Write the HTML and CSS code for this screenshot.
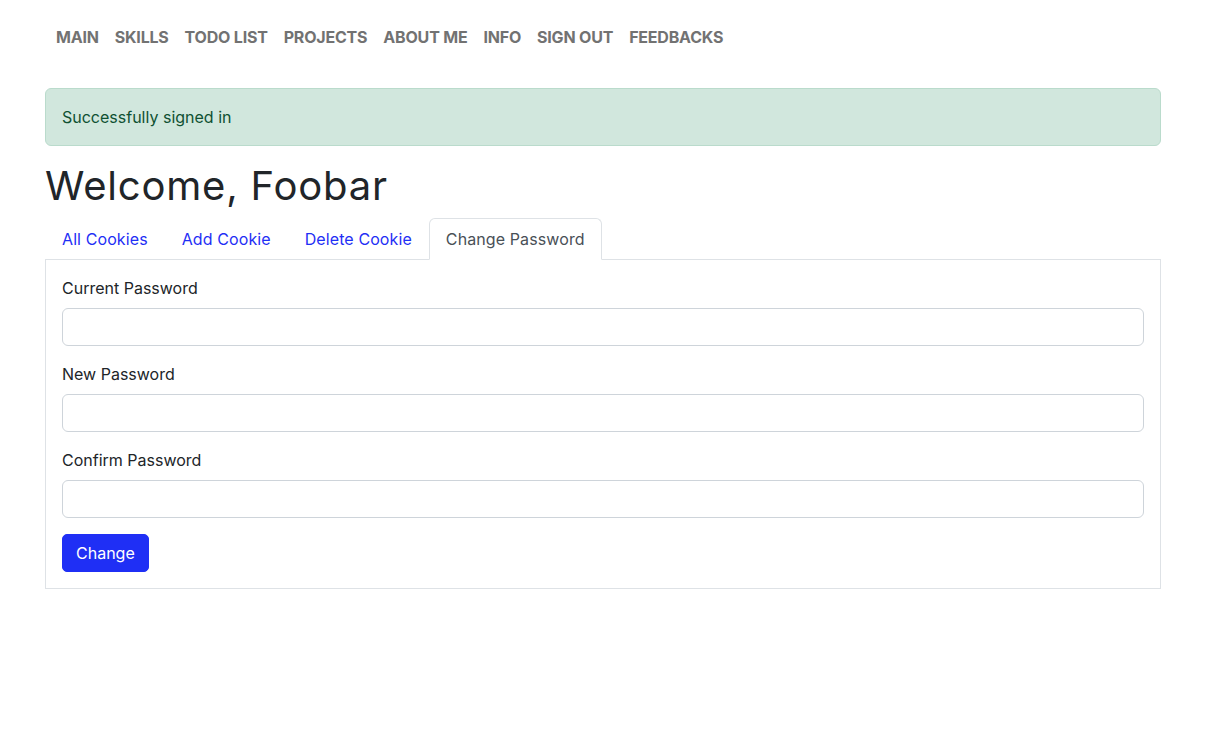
FILE: index.html
```html
<!DOCTYPE html>
<html lang="en">
<head>
<meta charset="utf-8">
<title>Welcome</title>
<link rel="stylesheet" href="styles.css">
</head>
<body>
<nav class="navbar">
  <ul class="nav-list">
    <li><a class="nav-link" href="#">Main</a></li>
    <li><a class="nav-link" href="#">Skills</a></li>
    <li><a class="nav-link" href="#">Todo list</a></li>
    <li><a class="nav-link" href="#">Projects</a></li>
    <li><a class="nav-link" href="#">About me</a></li>
    <li><a class="nav-link" href="#">Info</a></li>
    <li><a class="nav-link" href="#">Sign out</a></li>
    <li><a class="nav-link" href="#">Feedbacks</a></li>
  </ul>
</nav>
<main class="container">
  <div class="alert">Successfully signed in</div>
  <h1 class="title">Welcome, Foobar</h1>
  <ul class="tabs">
    <li><a class="tab" href="#">All Cookies</a></li>
    <li><a class="tab" href="#">Add Cookie</a></li>
    <li><a class="tab" href="#">Delete Cookie</a></li>
    <li><a class="tab active" href="#">Change Password</a></li>
  </ul>
  <div class="tab-pane">
    <form class="form">
      <div class="field">
        <label class="label" for="cur">Current Password</label>
        <input class="input" id="cur" type="password">
      </div>
      <div class="field">
        <label class="label" for="new">New Password</label>
        <input class="input" id="new" type="password">
      </div>
      <div class="field">
        <label class="label" for="conf">Confirm Password</label>
        <input class="input" id="conf" type="password">
      </div>
      <button class="btn" type="button">Change</button>
    </form>
  </div>
</main>
</body>
</html>
```
FILE: styles.css
```css
* { box-sizing: border-box; }
html, body {
  margin: 0;
  padding: 0;
  background: #fff;
}
body {
  font-family: "Inter", "Liberation Sans", sans-serif;
  font-size: 16px;
  line-height: 24px;
  color: #212529;
}
.navbar {
  padding: 17px 0 15px 48px;
  margin-bottom: 16px;
}
.nav-list {
  list-style: none;
  margin: 0;
  padding: 0;
  display: flex;
}
.nav-link {
  display: block;
  padding: 8px;
  color: #727272;
  font-weight: 700;
  text-transform: uppercase;
  text-decoration: none;
  letter-spacing: -0.2px;
}
.container {
  width: 1116px;
  margin: 0 auto;
}
.alert {
  background: #d1e7dd;
  border: 1px solid #badbcc;
  color: #0f5132;
  border-radius: 6px;
  padding: 16px;
  margin-bottom: 16px;
}
.title {
  margin: 0 0 8px;
  font-size: 40px;
  line-height: 48px;
  font-weight: 400;
  letter-spacing: 0.8px;
}
.tabs {
  list-style: none;
  margin: 0;
  padding: 0;
  display: flex;
  border-bottom: 1px solid #dee2e6;
}
.tab {
  display: block;
  padding: 8px 16px;
  border: 1px solid transparent;
  border-radius: 6px 6px 0 0;
  margin-bottom: -1px;
  color: #1f2ff5;
  text-decoration: none;
  letter-spacing: 0.1px;
}
.tab.active {
  color: #495057;
  background: #fff;
  border-color: #dee2e6 #dee2e6 #fff;
}
.tab-pane {
  border: 1px solid #dee2e6;
  border-top: 0;
  padding: 16px;
}
.field {
  margin-bottom: 16px;
}
.label {
  display: block;
  margin-bottom: 8px;
}
.input {
  display: block;
  width: 100%;
  height: 38px;
  border: 1px solid #ced4da;
  border-radius: 6px;
  font: inherit;
  padding: 6px 12px;
}
.btn {
  display: block;
  height: 38px;
  padding: 6px 13px;
  background: #1f2ff5;
  border: 1px solid #1f2ff5;
  border-radius: 5px;
  color: #fff;
  font: inherit;
}
```
